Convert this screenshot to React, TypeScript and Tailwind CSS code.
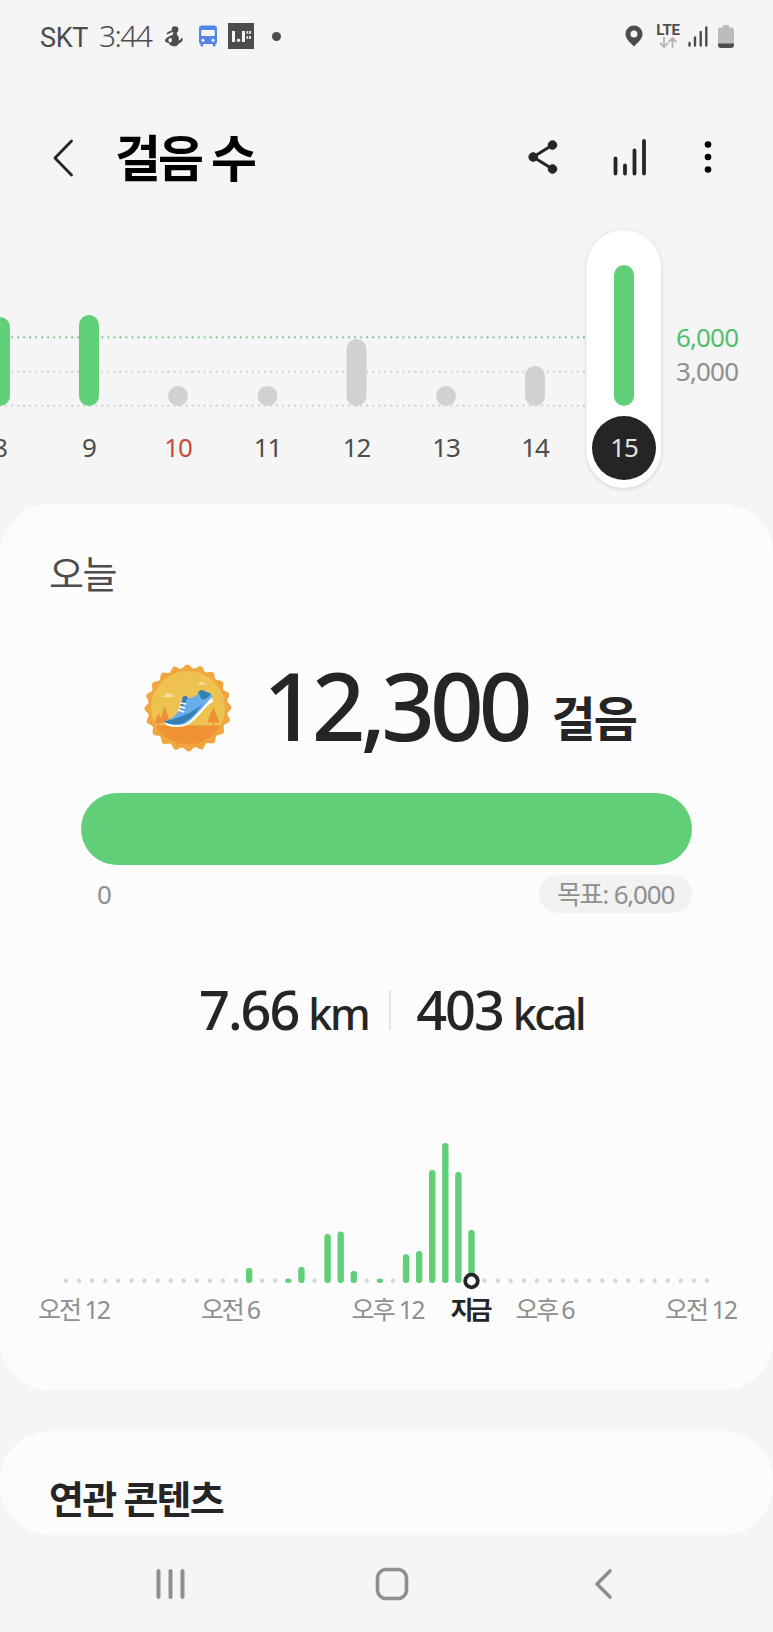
import type { ReactNode } from 'react';

interface DayBar {
  label: string;
  x: number;
  top: number;
  color: string;
  textColor?: string;
}

const GREEN = '#61ce78';
const GRAY = '#d1d1d1';

const days: DayBar[] = [
  { label: '8', x: 0, top: 97, color: GREEN },
  { label: '9', x: 89, top: 95, color: GREEN },
  { label: '10', x: 178, top: 166, color: GRAY, textColor: '#cb4a3e' },
  { label: '11', x: 267.5, top: 166, color: GRAY },
  { label: '12', x: 356.5, top: 119, color: GRAY },
  { label: '13', x: 446, top: 166, color: GRAY },
  { label: '14', x: 535, top: 146, color: GRAY },
];

// Half-hour slots with a recorded step count, value is the bar height
const SLOT_COUNT = 50;
const slots: Record<number, number> = {
  14: 15, 17: 4.5, 18: 16, 20: 49, 21: 51.5, 22: 12, 24: 4.5,
  26: 28.7, 27: 32, 28: 113, 29: 140, 30: 111, 31: 53,
};
const NOW_SLOT = 31;

const hourLabels = [
  { text: '오전 12', x: 74.5, width: 73 },
  { text: '오전 6', x: 231, width: 60 },
  { text: '오후 12', x: 388.5, width: 74 },
  { text: '오후 6', x: 545.5, width: 60 },
  { text: '오전 12', x: 701.5, width: 73 },
];

const slotX = (i: number) => 66 + i * 13.08;

function StatusBar() {
  return (
    <header className="flex h-[72px] items-center pl-[40px] pr-[39px] text-[#4c4c4c]">
      <span className="font-[Roboto,sans-serif] text-[27px] leading-none tracking-[-0.4px] mt-[4px]">SKT</span>
      <span className="ml-[11px] text-[30px] font-light leading-none tracking-[-1.6px]">3:44</span>
      <svg className="ml-[14px]" width="18" height="21" viewBox="0 0 18 21" fill="#4c4c4c">
        <circle cx="10" cy="3.6" r="3.4" />
        <path d="M8 6.5h4.2l-.4 2.3c1.8 1.2 2.4 3.4 1.9 5.6 1.4-.2 2.3-1 2.5-2.4l1.6.6c0 2.8-1.6 4.4-3.9 4.8-1 2-3 2.9-5 2.9-2.8 0-4.6-1.3-5.2-3.2C1.8 16.700 0 16 0 14.600c0-1.300 2.400-3.600 4.700-4.500l3-1z" />
        <path d="M2 8c1.200-1.800 3-2.300 5-2.700" stroke="#4c4c4c" strokeWidth="1.700" fill="none" />
        <ellipse cx="5.200" cy="14.300" rx="1.700" ry="2.200" fill="#f5f5f5" />
      </svg>
      <svg className="ml-[15px]" width="20" height="22" viewBox="0 0 20 22">
        <path d="M4 .5h12c2 0 3 1.200 3 3V17a2 2 0 0 1-1.500 2v1.200a1.400 1.400 0 0 1-2.800 0V19H5.300v1.200a1.400 1.400 0 0 1-2.800 0V19A2 2 0 0 1 1 17V3.500c0-1.800 1-3 3-3z" fill="#5584e8" />
        <rect x="3.200" y="5" width="13.600" height="6" rx=".8" fill="#f5f5f5" />
        <circle cx="5" cy="15.300" r="1.500" fill="#f5f5f5" />
        <circle cx="15" cy="15.300" r="1.500" fill="#f5f5f5" />
      </svg>
      <svg className="ml-[10px]" width="26" height="26" viewBox="0 0 26 26">
        <rect width="26" height="26" fill="#4c4c4c" />
        <g fill="#f5f5f5">
          <rect x="4" y="8" width="3" height="11" />
          <rect x="14" y="8" width="3" height="11" />
          <circle cx="10.500" cy="17.300" r="1.700" />
          <path d="M18.500 8h4.500v3h-4.500zM18.500 13h4.500v3h-4.500z" opacity=".85" />
        </g>
        <path d="M20.500 8v8" stroke="#4c4c4c" strokeWidth=".8" />
      </svg>
      <span className="ml-[18px] h-[9px] w-[9px] rounded-full bg-[#4c4c4c]" />

      <svg className="ml-auto" width="18" height="22" viewBox="0 0 18 22" fillRule="evenodd">
        <path d="M9 .5a8.500 8.500 0 0 1 8.500 8.500c0 4.500-4 8-8.500 12.500C4.500 17 .5 13.500.5 9A8.500 8.500 0 0 1 9 .5zm0 5a3.500 3.500 0 1 0 0 7 3.500 3.500 0 0 0 0-7z" fill="#4c4c4c" />
      </svg>
      <div className="ml-[13px] flex w-[24px] flex-col items-center">
        <span className="font-[Roboto,sans-serif] text-[15px] font-bold leading-[12px] tracking-[-0.3px]">LTE</span>
        <svg className="mt-px" width="18" height="11" viewBox="0 0 18 11" fill="none" stroke="#b5b5b5" strokeWidth="1.800">
          <path d="M5 0v10M1 6l4 4 4-4M13.500 11V1M9.500 5l4-4 4 4" />
        </svg>
      </div>
      <svg className="ml-[8px]" width="20" height="21" viewBox="0 0 20 21" stroke="#4c4c4c" strokeWidth="2.400" strokeLinecap="round">
        <path d="M1.500 17v2.500M7 11.500v8M12.700 6v13.500M18.300 1.500v18" />
      </svg>
      <svg className="ml-[10px]" width="16" height="23" viewBox="0 0 16 23">
        <path d="M5 0h6v2.500h2.500a2.500 2.500 0 0 1 2.500 2.500v14H0V5a2.500 2.500 0 0 1 2.500-2.500H5z" fill="#bcbcbc" />
        <path d="M0 18.500h16V20a3 3 0 0 1-3 3H3a3 3 0 0 1-3-3z" fill="#4c4c4c" />
      </svg>
    </header>
  );
}

function IconButton({ label, className, children }: { label: string; className: string; children: ReactNode }) {
  return (
    <button aria-label={label} className={className}>
      {children}
    </button>
  );
}

function TitleBar() {
  return (
    <div className="flex h-[148px] items-center pl-[52px] pr-[61px] pb-[-0px]">
      <IconButton label="뒤로" className="mt-[23px] self-start -translate-y-0">
        <svg className="mt-[43px]" width="22" height="40" viewBox="0 0 22 40" fill="none" stroke="#252525" strokeWidth="2.800" strokeLinecap="round" strokeLinejoin="round">
          <path d="M19.500 3 3 20l16.500 17" />
        </svg>
      </IconButton>
      <h1 className="ml-[41px] mt-[24px] text-[50px] font-bold leading-none tracking-[-3px] text-black">걸음 수</h1>
      <IconButton label="공유" className="ml-auto mt-[22px]">
        <svg width="30" height="34" viewBox="0 0 30 34" fill="#252525" stroke="#252525">
          <path d="M24.500 5 5.200 17l19.300 12" fill="none" strokeWidth="3" />
          <circle cx="24.500" cy="5" r="4.300" />
          <circle cx="5.200" cy="17" r="4.300" />
          <circle cx="24.500" cy="29" r="4.300" />
        </svg>
      </IconButton>
      <IconButton label="통계" className="ml-[55px] mt-[22px]">
        <svg width="34" height="38" viewBox="0 0 34 38" stroke="#252525" strokeWidth="3.800" strokeLinecap="round">
          <path d="M2.500 20.500v15M12 27.500v8M21.500 12.500v23M31 3v32.500" />
        </svg>
      </IconButton>
      <IconButton label="더보기" className="ml-[57px] mt-[22px]">
        <svg width="8" height="32" viewBox="0 0 8 32">
          <circle cx="4" cy="3.500" r="3.300" />
          <circle cx="4" cy="16" r="3.300" />
          <circle cx="4" cy="28.500" r="3.300" />
        </svg>
      </IconButton>
    </div>
  );
}

function GridLine({ y, color }: { y: number; color: string }) {
  return <path d={`M0 ${y}H587`} stroke={color} strokeWidth="2.200" strokeLinecap="round" strokeDasharray="0 6.020" />;
}

function WeekChart() {
  return (
    <svg className="block" width="773" height="284" viewBox="0 0 773 284" fontSize="26">
      <GridLine y={117.3} color="#74c58a" />
      <GridLine y={151.7} color="#cfcfcf" />
      <GridLine y={185.7} color="#cfcfcf" />
      {days.map((d) => (
        <g key={d.label}>
          <rect x={d.x - 10} y={d.top} width="20" height={186 - d.top} rx="10" fill={d.color} />
          <text x={d.x} y="237" textAnchor="middle" letterSpacing="-1" fill={d.textColor ?? '#4c4c4c'}>
            {d.label}
          </text>
        </g>
      ))}
      {/* Selected day */}
      <rect className="drop-shadow-sm" x="586.500" y="10" width="74.500" height="258" rx="37.200" fill="#fff" />
      <rect x="614" y="45" width="20" height="141" rx="10" fill={GREEN} />
      <circle cx="624" cy="228" r="32" fill="#252525" />
      <text x="624" y="237" textAnchor="middle" letterSpacing="-1" fill="#e4e4e4">15</text>
      <text x="676" y="127" textLength="63" fill="#52bf70">6,000</text>
      <text x="676" y="161" textLength="63" fill="#8f8f8f">3,000</text>
    </svg>
  );
}

function Badge() {
  const points = Array.from({ length: 160 }, (_, i) => {
    const a = (i / 160) * Math.PI * 2;
    const r = 41.7 + 1.9 * Math.cos(a * 20 + Math.PI / 10);
    return `${44 + r * Math.cos(a)},${44 + r * Math.sin(a)}`;
  }).join(' ');
  return (
    <svg className="mt-[29px] shrink-0" width="88" height="88" viewBox="0 0 88 88">
      <polygon points={points} fill="#f0a63c" />
      <circle cx="44" cy="44" r="37" fill="#eec251" />
      <path d="M11.500 61.500h65a37 37 0 0 1-65 0z" fill="#ee9234" />
      <path d="M10 59.500 14.500 49l4.500 10.500zM15.500 58 20.500 42l6 16zM63 58.500 69.500 43l6 15.500z" fill="#ec9139" />
      <path d="M20.500 56v6M69.500 56v6M14.500 57v5" stroke="#ec9139" strokeWidth="1.300" />
      <path d="M18 33c1-2 3-1 3.500-2.500 1-2 4.500-2 5.500-.3 2 0 2.800 1 2.800 2.800zM53 20.500c1-1.300 2-.8 3-2 1.500-1.300 3-.5 3.500.5 1.300 0 2.500.5 3 1.500z" fill="#f6dfa2" />
      <path d="M20 58.500c2 5 18 6.500 26 1C56 52 61 42 69 37.500l-1-4.500-8 6-18 17z" fill="#fff" />
      <path d="M20 57.500c5-1 11-5 14-9.500l3-5 2-10.500 3.500-.8 1.500 2.500c4 0 9.500-2.500 11-6l11 .3 2.500 4.500c-5 4-9 10-13.500 14.500-5 5-9 10-14.500 12.500-6 2-15 1.500-20.500-2.500z" fill="#66aee9" />
      <path d="M39 32.500l3.500-.8 1 2.500-3 6-4.500 4zM20 57.500c9-2 15-4 22-7 6-2.500 11-6 16-10-6 8-11 15-19 18.500-6 2-15 1.500-19-1.500z" fill="#367fb5" />
      <path d="M54 28l4-2.300 9 4.300-4 4-3 1.500-3-1z" fill="#367fb5" />
      <path d="M36 39l6 1M35 42.500l6 1.500M34 46l6 2" stroke="#fff" strokeWidth="1.500" />
    </svg>
  );
}

function GoalProgress() {
  return (
    <div className="mx-[81px]">
      <div className="h-[72px] rounded-full bg-[#61ce78]" />
      <div className="mt-[10px] flex items-center justify-between text-[26px] leading-none text-[#8f8f8f]">
        <span className="ml-[16px]">0</span>
        <span className="flex h-[38px] w-[153px] items-center justify-center whitespace-nowrap rounded-full bg-[#f2f2f2] tracking-[-1.200px]">
          목표: 6,000
        </span>
      </div>
    </div>
  );
}

function DayChart() {
  return (
    <svg className="block" width="773" height="220" viewBox="0 0 773 220" fontSize="25">
      {Array.from({ length: SLOT_COUNT }, (_, i) =>
        slots[i] ? (
          <rect key={i} x={slotX(i) - 3.2} y={163 - slots[i]} width="6.400" height={slots[i]} rx="3" fill={GREEN} />
        ) : (
          <circle key={i} cx={slotX(i)} cy="160.700" r="2.200" fill="#d6d6d6" />
        )
      )}
      <circle cx={slotX(NOW_SLOT)} cy="161" r="6.300" fill="#fff" stroke="#252525" strokeWidth="3.800" />
      {hourLabels.map((h) => (
        <text key={h.x} x={h.x - h.width / 2} y="199" textLength={h.width} fill="#8f8f8f">
          {h.text}
        </text>
      ))}
      <text x="450.500" y="199" textLength="42" fontWeight="700" fill="#252525">지금</text>
    </svg>
  );
}

function NavBar() {
  return (
    <nav className="flex h-[97px] items-center justify-between pl-[155px] pr-[160px]">
      <svg width="32" height="34" viewBox="0 0 32 34" stroke="#8f8f8f" strokeWidth="4" strokeLinecap="round">
        <path d="M3.500 4v26M15.500 4v26M27.500 4v26" />
      </svg>
      <svg className="ml-[3px]" width="34" height="34" viewBox="0 0 34 34">
        <rect x="2.500" y="2.500" width="29" height="29" rx="8.500" fill="none" stroke="#8f8f8f" strokeWidth="3.600" />
      </svg>
      <svg width="20" height="34" viewBox="0 0 20 34" fill="none" stroke="#8f8f8f" strokeWidth="3.600" strokeLinecap="round" strokeLinejoin="round">
        <path d="M17 4 4 17l13 13" />
      </svg>
    </nav>
  );
}

export default function App() {
  return (
    <div className="h-[1632px] w-[773px] overflow-hidden bg-[#f5f5f5] font-['Noto_Sans','Noto_Sans_CJK_KR',sans-serif]">
      <StatusBar />
      <TitleBar />
      <WeekChart />

      <section className="h-[886px] overflow-hidden rounded-[50px] bg-[#fcfcfc]">
        <h2 className="ml-[49px] mt-[49px] h-[40px] text-[38px] leading-[40px] tracking-[-1.500px] text-[#4c4c4c]">오늘</h2>
        <div className="flex h-[200px] items-center whitespace-nowrap pl-[144px] text-[#252525]">
          <Badge />
          <span className="ml-[31px] mt-[24px] text-[94px] font-medium leading-none tracking-[-5px]">12,300</span>
          <span className="ml-[24px] mt-[52px] text-[48px] font-bold leading-none tracking-[-2px]">걸음</span>
        </div>
        <GoalProgress />
        <div className="mt-[66px] flex h-[60px] items-baseline whitespace-nowrap pl-[199px] text-[#252525]">
          <span className="text-[54px] font-medium leading-[60px] tracking-[-2px]">7.66</span>
          <span className="ml-[10px] text-[43px] font-medium leading-[60px] tracking-[-2.500px]">km</span>
          <span className="ml-[21px] h-[40px] w-[2px] bg-[#e4e4e4]" />
          <span className="ml-[25px] text-[54px] font-medium leading-[60px] tracking-[-2px]">403</span>
          <span className="ml-[10px] text-[43px] font-medium leading-[60px] tracking-[-2.500px]">kcal</span>
        </div>
        <div className="mt-[81px]">
          <DayChart />
        </div>
      </section>

      <section className="mt-[41px] h-[104px] overflow-hidden rounded-[50px] bg-[#fcfcfc]">
        <h2 className="ml-[49px] mt-[47px] text-[38px] font-bold leading-[40px] tracking-[-1.800px] text-[#252525]">연관 콘텐츠</h2>
      </section>
      <NavBar />
    </div>
  );
}
